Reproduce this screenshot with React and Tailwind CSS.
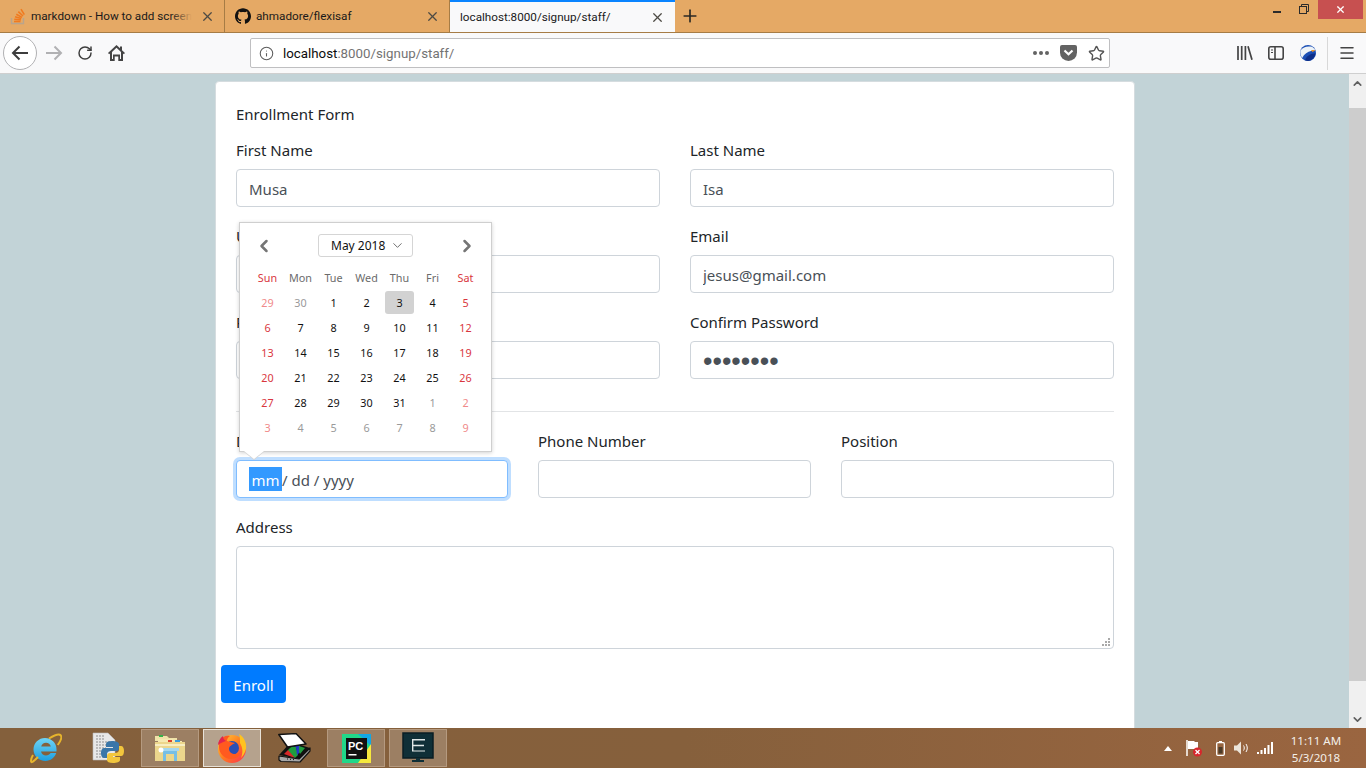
import React from "react";
import { SiGithub } from "react-icons/si";
import { ChevronLeft, ChevronRight, ChevronDown, ChevronUp, X, Plus, RotateCw, Info, Star, Menu } from "lucide-react";

const F = "[font-family:'Noto_Sans','Open_Sans',sans-serif]";
const R = "[font-family:Roboto,'Noto_Sans',sans-serif]";

function SO() {
  return (
    <svg width="16" height="18" viewBox="0 0 16 18" fill="none">
      <path d="M1.5 11v5.500h12V11" stroke="#b9a48c" strokeWidth="1.400" />
      <g stroke="#f07a1f" strokeWidth="1.600">
        <path d="M4 14.500h6.500" />
        <path d="M4.300 12.300l6.500.6" />
        <path d="M5 9.800l6.300 1.800" />
        <path d="M6.300 7.200l5.700 3.200" />
        <path d="M8.300 4.600l4.700 4.400" />
        <path d="M11 2.200l3.300 5.400" />
      </g>
    </svg>
  );
}

function Tab({ icon, title, active, fade }) {
  return (
    <div className={`relative flex h-full w-[225px] shrink-0 items-center pl-[10px] ${active ? "z-10 h-[34px] self-start border-t-2 border-[#0a84ff] bg-[#f9f9fa] pr-[10px]" : "border-r border-[#a67c45] pr-[9px]"}`}>
      {icon && <span className="mr-[5px] flex w-[16px] justify-center">{icon}</span>}
      <span className={`relative flex-1 overflow-hidden whitespace-nowrap pt-[1px] text-[11.700px] text-[#1a1a1a] ${R}`}>
        {title}
        {fade && <span className="absolute right-0 top-0 h-full w-[22px] bg-gradient-to-r from-transparent to-[#e5a965]" />}
      </span>
      <X size={15} strokeWidth={2} className="ml-2 text-[#4d4a44]" />
    </div>
  );
}

function BackArrow({ color = "#3d3d3d", flip }) {
  return (
    <svg width="18" height="16" viewBox="0 0 18 16" fill="none" stroke={color} strokeWidth="2">
      <path d={flip ? "M1 8h15M9.500 1.500L16 8l-6.500 6.500" : "M17 8H2M8.500 1.500L2 8l6.500 6.500"} />
    </svg>
  );
}

function Home() {
  return (
    <svg width="17" height="16" viewBox="0 0 17 16" fill="#444">
      <path fillRule="evenodd" d="M8.500 0L0 8l1.200 1.200L2 8.500V16h4.700v-4.500h3.600V16H15V8.500l.8.700L17 8 14 5.200V1.500h-2v1.800zM4 7l4.500-4.300L13 7v7h-1v-4.500H5V14H4z" />
    </svg>
  );
}

function Pocket() {
  return (
    <svg width="17" height="16" viewBox="0 0 17 16">
      <path d="M0 2a2 2 0 012-2h13a2 2 0 012 2v5.500a8.500 8.500 0 01-17 0z" fill="#636363" />
      <path d="M4.500 5.500l4 3.700 4-3.700" stroke="#fff" strokeWidth="2.200" fill="none" />
    </svg>
  );
}

function Library() {
  return (
    <svg width="16" height="14" viewBox="0 0 16 14" stroke="#444" strokeWidth="1.700" fill="none">
      <path d="M1 0v14M4.700 0v14M8.400 0v14M11 .3l4 13.500" />
    </svg>
  );
}

function Sidebar() {
  return (
    <svg width="16" height="14" viewBox="0 0 16 14" fill="none" stroke="#444" strokeWidth="1.600">
      <rect x=".8" y=".8" width="14.400" height="12.400" rx="2" />
      <path d="M7 1v12" />
      <path d="M3 4h2M3 6.500h2" strokeWidth="1.200" />
    </svg>
  );
}

function Eagle() {
  return (
    <svg width="16" height="16" viewBox="0 0 16 16">
      <circle cx="8" cy="8" r="8" fill="#1b4fb5" />
      <path d="M0.400 5.500C3 2 6.500 1 11 1.600c2 .6 3.500 2 4.300 3.700l-4.300.8C8 6.800 4 9 2.200 13 .6 11 0 8 .4 5.500z" fill="#eef3f7" />
      <path d="M11 5l4.500.2-3 1.900z" fill="#f0921e" />
      <path d="M6 13c2-3 6-5 9.600-4.500C15 12 12 15.600 8 16c-1 0-2-.3-3-.8z" fill="#0d2f8a" />
    </svg>
  );
}

function Label({ children }) {
  return <label className="mb-[7px] block h-6 text-[15px] leading-[24px] text-[#212529]">{children}</label>;
}

function Field({ label, value, type = "text" }) {
  const pw = type === "password";
  return (
    <div className="min-w-0 flex-1">
      <Label>{label}</Label>
      <input
        readOnly
        type={type}
        value={value || ""}
        className={`block h-[38px] w-full rounded-[4px] border border-[#ced4da] bg-white px-3 text-[#495057] outline-none ${pw ? "pt-[3px] text-[27px] [font-family:'Liberation_Sans',sans-serif]" : "pt-[2px] text-[15px]"}`}
      />
    </div>
  );
}

const RED = "text-[#d9363e]";
const DARK = "text-[#111]";
const HEAD = ["Sun", "Mon", "Tue", "Wed", "Thu", "Fri", "Sat"];
const WEEKS = [
  [29, 30, 1, 2, 3, 4, 5],
  [6, 7, 8, 9, 10, 11, 12],
  [13, 14, 15, 16, 17, 18, 19],
  [20, 21, 22, 23, 24, 25, 26],
  [27, 28, 29, 30, 31, 1, 2],
  [3, 4, 5, 6, 7, 8, 9],
];

function dayColor(r, c) {
  const out = (r === 0 && c < 2) || (r === 4 && c > 4) || r === 5;
  const weekend = c === 0 || c === 6;
  if (out) return weekend ? "text-[#f08a8a]" : "text-[#9a9a9a]";
  return weekend ? RED : DARK;
}

function Calendar() {
  return (
    <div className="absolute left-[23px] top-[140px] z-20 h-[230px] w-[253px] border border-[#cfcfcf] bg-white shadow-[0_1px_4px_rgba(0,0,0,0.18)]">
      <div className="flex h-[42px] items-center pl-[14px] pr-[14px] pt-[3px]">
        <ChevronLeft size={20} strokeWidth={3} className="text-[#757575]" />
        <div className="ml-[44px] flex h-[23px] w-[95px] items-center rounded-[3px] border border-[#d5d5d5] pl-[12px] text-[12px] text-[#111]">
          May 2018
          <ChevronDown size={15} strokeWidth={1.500} className="ml-[5px] text-[#666]" />
        </div>
        <ChevronRight size={20} strokeWidth={3} className="ml-auto text-[#757575]" />
      </div>
      <div className="ml-[11px] grid w-[231px] grid-cols-[repeat(7,33px)] auto-rows-[25px] text-center text-[10.800px] leading-[25px]">
        {HEAD.map((h, i) => (
          <div key={h} className={i === 0 || i === 6 ? RED : "text-[#6b6b6b]"}>{h}</div>
        ))}
        {WEEKS.map((w, r) =>
          w.map((d, c) => (
            <div key={`${r}-${c}`} className="flex items-center justify-center">
              {r === 0 && c === 4 ? (
                <span className="mr-[1px] flex h-[23px] w-[29px] items-center justify-center rounded-[3px] bg-[#d2d2d2] pl-[1px] text-[#111]">{d}</span>
              ) : (
                <span className={dayColor(r, c)}>{d}</span>
              )}
            </div>
          ))
        )}
      </div>
      <span className="absolute left-[4px] top-[228px] h-0 w-0 border-x-[10px] border-t-[8px] border-x-transparent border-t-white [filter:drop-shadow(0_1px_0_#d5d5d5)]" />
    </div>
  );
}

function DateField() {
  return (
    <div className="min-w-0 w-[272px]">
      <Label>Date of Birth</Label>
      <div className="flex h-[38px] w-full items-center rounded-[4px] border border-[#80bdff] bg-white pl-[12px] text-[15px] text-[#495057] shadow-[0_0_0_3px_rgba(0,123,255,0.25)]">
        <span className="flex h-[24px] w-[33px] items-center justify-center bg-[#3399ff] pt-[3px] text-white">mm</span>
        <span className="whitespace-pre pt-[3px]">/ dd / yyyy</span>
      </div>
    </div>
  );
}

function IE() {
  return (
    <svg width="32" height="34" viewBox="0 0 32 34" fill="none">
      <defs>
        <linearGradient id="iea" x1="0" y1="0" x2="0" y2="1">
          <stop offset="0" stopColor="#6fd4f5" />
          <stop offset="1" stopColor="#1d9fe0" />
        </linearGradient>
      </defs>
      <path d="M3.500 18.500a11.500 11.500 0 0123 0v2H11c.6 2.600 2.600 4 5 4 2 0 3.600-.8 4.600-2.400h5.600C24.600 26.800 20.600 30 15.500 30 8.800 30 3.500 25 3.500 18.500zm7.700-3h9.600c-.5-2.300-2.400-3.800-4.800-3.800s-4.300 1.500-4.800 3.800z" fill="url(#iea)" />
      <path d="M19 7.500c5-3 10-5 11.700-3.200 1.600 1.800-.7 6.500-3 9.700M8 26C4 30 1.600 32 1.200 30.800c-.6-1.600.2-4 1.800-6.800" stroke="#e6b42c" strokeWidth="2" />
    </svg>
  );
}

function PythonFile() {
  return (
    <svg width="32" height="32" viewBox="0 0 32 32">
      <path d="M1 1h15l7 7v20H1z" fill="#e8e8e8" stroke="#bbb" strokeWidth=".6" />
      <path d="M4 4h9M4 7h9M4 10h14M4 13h14M4 16h10M4 19h10M4 22h10M4 25h10" stroke="#8d8d8d" strokeDasharray="2 1" />
      <path d="M20 9c-4 0-6 1-6 3v3h7v1h-8c-3 0-4 2-4 5s1 5 4 5h2v-4c0-2 2-3 4-3h5c2 0 3-1 3-3v-4c0-2-3-3-7-3z" fill="#3a76a8" />
      <path d="M21 31c4 0 7-1 7-3v-3h-7v-1h8c2 0 3-2 3-5s-1-5-3-5h-2v4c0 2-2 3-4 3h-5c-2 0-3 1-3 3v4c0 2 2 3 6 3z" fill="#f2c63d" />
    </svg>
  );
}

function Folder() {
  return (
    <svg width="32" height="32" viewBox="0 0 32 32">
      <path d="M1 4h12l2 2h8v3H1z" fill="#efe3a8" />
      <rect x="5" y="3" width="4" height="2" fill="#35b24a" />
      <path d="M4 7h15l2 2h7v3H4z" fill="#f6e9b2" />
      <rect x="14" y="8" width="4" height="2" fill="#d9432f" />
      <rect x="21" y="8" width="5" height="2" fill="#3b9bdc" />
      <path d="M1 10h30v19H1z" fill="#ecd68c" />
      <path d="M1 12h30v2H1z" fill="#f8edc2" />
      <path d="M9 19h14v10h-3v-7h-8v7H9z" fill="#77bfe6" />
      <path d="M7 16h18v3H7z" fill="#a5d7ef" />
      <circle cx="7" cy="18" r="2.500" fill="#fff" />
    </svg>
  );
}

function Firefox() {
  return (
    <svg width="30" height="30" viewBox="0 0 30 30">
      <defs>
        <linearGradient id="ffa" x1="0" y1="0" x2="1" y2="1">
          <stop offset="0" stopColor="#ffd23c" />
          <stop offset=".5" stopColor="#ff7a1f" />
          <stop offset="1" stopColor="#ff2f52" />
        </linearGradient>
      </defs>
      <circle cx="15" cy="16" r="14" fill="url(#ffa)" />
      <path d="M22 1c5 3 8 9 7 15-1 4-3 7-5 9 2-5 2-10-1-15 0-4 0-6-1-9z" fill="#ffc21f" />
      <circle cx="15" cy="15" r="7" fill="#2a4fb5" />
      <path d="M2 8c3-4 7-6 11-5-2 1-3 3-3 5 2 1 5 1 8 2-3 2-6 3-6 6 0 3 3 5 6 5 3 0 5-1 6-3-1 5-5 8-10 8C7 26 2 20 2 14z" fill="#ff5a1f" />
      <path d="M1 12c0-3 2-7 5-9 0 2 1 4 3 5-3 1-6 2-8 4z" fill="#e0244f" />
    </svg>
  );
}

function Scanner() {
  return (
    <svg width="33" height="30" viewBox="0 0 33 30">
      <path d="M1 22L13 9l19 6-11 11z" fill="#111" />
      <path d="M6 21l4-4 4 1 3 7z" fill="#d62828" />
      <path d="M10 17l4-4 4 1 2 8-3 3z" fill="#1f9d3f" />
      <path d="M14 13l3-2 5 2 0 6-3 3-1-8z" fill="#2438c8" />
      <path d="M21 13l6 2-5 6-1-2z" fill="#1f9d3f" />
      <path d="M.8 1.500L18 .6l10 10.400-18.500 3z" fill="#fff" stroke="#111" strokeWidth="1.500" strokeLinejoin="round" />
      <path d="M1 23l20 3 11-11v3L22 29 3 28.500 1 27z" fill="#a8a8a8" stroke="#111" strokeWidth="1.200" strokeLinejoin="round" />
      <path d="M9 26h1M12 26.300h1M15 26.600h1" stroke="#111" />
    </svg>
  );
}

function PyCharm() {
  return (
    <svg width="29" height="29" viewBox="0 0 29 29">
      <rect width="29" height="29" fill="#21d789" />
      <path d="M16 0h13v12z" fill="#11a7e5" />
      <path d="M29 10v19H16z" fill="#f6e93d" />
      <rect x="4" y="4" width="21" height="21" fill="#111" />
      <rect x="6.500" y="20" width="8" height="1.500" fill="#fff" />
      <text x="6" y="16" fill="#fff" fontSize="11" fontWeight="700" fontFamily="'Liberation Sans',sans-serif">PC</text>
    </svg>
  );
}

function Terminal() {
  return (
    <svg width="32" height="32" viewBox="0 0 32 32">
      <rect x="1" y="1" width="30" height="25" fill="#0f2f37" stroke="#0a1e24" strokeWidth="1.500" />
      <path d="M10 7h13v1.400H11.400v4.400H22v1.400H11.400v4.400H23V19.500H10z" fill="#dfe6e6" />
      <path d="M14 26h4v2h4v2H10v-2h4z" fill="#0f2f37" />
    </svg>
  );
}

function TaskItem({ children, state }) {
  const cls =
    state === "active"
      ? "border-[#e8e2d8] bg-[#b5a28d]"
      : state === "open"
      ? "border-[#b59a80] bg-[#9c7f63]"
      : "border-transparent";
  return <div className={`flex h-[38px] w-[58px] shrink-0 items-center justify-center border ${cls}`}>{children}</div>;
}

function Tray() {
  return (
    <div className="ml-auto flex items-center pr-[22px]">
      <svg width="8" height="5" viewBox="0 0 8 5" className="mr-[14px]"><path d="M0 5L4 0l4 5z" fill="#fff" /></svg>
      <svg width="16" height="17" viewBox="0 0 16 17" className="mr-[14px]">
        <path d="M1 0v16" stroke="#fff" strokeWidth="1.500" />
        <path d="M2 1h6l1 1h3v7H2z" fill="#fff" />
        <circle cx="11.500" cy="12" r="4.500" fill="#d8262c" />
        <path d="M9.500 10l4 4M13.500 10l-4 4" stroke="#fff" strokeWidth="1.300" />
      </svg>
      <svg width="9" height="15" viewBox="0 0 9 15" className="mr-[9px]">
        <rect x=".7" y="1.700" width="7.600" height="12.600" rx="1" fill="none" stroke="#fff" strokeWidth="1.300" />
        <rect x="3" y="0" width="3" height="1.500" fill="#fff" />
        <rect x="2.500" y="6" width="4" height="6.500" fill="#4a3a28" />
      </svg>
      <svg width="16" height="14" viewBox="0 0 16 14" className="mr-[7px]">
        <path d="M0 4.500h3L7 .5v13l-4-4H0z" fill="#ece5da" />
        <path d="M9.500 4.500c1 1.500 1 3.500 0 5M12 3c1.700 2.500 1.700 5.500 0 8" stroke="#fff" strokeWidth="1" fill="none" />
      </svg>
      <svg width="16" height="12" viewBox="0 0 16 12" className="mr-[15px]">
        <path d="M0 10h2v2H0zM3.500 8h2v4h-2zM7 6h2v6H7zM10.500 3h2v9h-2zM14 0h2v12h-2z" fill="#fff" />
      </svg>
      <div className="mt-[1px] w-[56px] text-center text-[11.600px] leading-[17px] text-[#f3efe9]">
        <div>11:11 AM</div>
        <div>5/3/2018</div>
      </div>
    </div>
  );
}

export default function App() {
  return (
    <div className={`flex h-screen w-[1366px] flex-col overflow-hidden ${F}`}>
      {/* Tab bar */}
      <div className="relative flex h-[33px] shrink-0 border-b border-[#a67c45] bg-[#e5a965]">
        <Tab icon={<SO />} title="markdown - How to add screenshots" fade />
        <Tab icon={<SiGithub size={16} color="#111" />} title="ahmadore/flexisaf" />
        <Tab title="localhost:8000/signup/staff/" active />
        <Plus size={20} strokeWidth={2} className="ml-[5px] mt-[6px] text-[#2b2924]" />
        <div className="ml-auto flex h-[19px] items-start">
          <span className="mr-[18px] mt-[11px] h-[2px] w-[8px] bg-[#2b2b2b]" />
          <svg width="10" height="10" viewBox="0 0 10 10" fill="none" stroke="#2b2b2b" className="mr-[9px] mt-[4px]">
            <rect x=".5" y="2.500" width="7" height="7" />
            <path d="M2.500 2V.5h7v7H8" />
          </svg>
          <div className="mr-[3px] flex h-[19px] w-[45px] items-center justify-center bg-[#c75050]">
            <X size={11} strokeWidth={2.600} color="#fff" />
          </div>
        </div>
      </div>

      {/* Toolbar */}
      <div className="flex h-[41px] shrink-0 items-center border-b border-[#cfcfcf] bg-[#f9f9fa]">
        <div className="ml-[3px] flex h-[34px] w-[34px] items-center justify-center rounded-full border border-[#b1b1b3] bg-white">
          <BackArrow />
        </div>
        <span className="ml-[8px] flex"><BackArrow color="#b1b1b3" flip /></span>
        <RotateCw size={16} strokeWidth={2.200} className="ml-[14px] text-[#3d3d3d]" />
        <span className="ml-[15px] flex"><Home /></span>
        <div className="ml-[125px] flex h-[30px] w-[860px] items-center rounded-[2px] border border-[#bfbfc1] bg-white pl-[8px] pr-[4px]">
          <Info size={15} strokeWidth={1.700} className="text-[#5c5c5c]" />
          <span className={`ml-[9px] pt-[1px] text-[13.300px] text-[#0c0c0d] ${R}`}>localhost<span className="text-[#737373]">:8000/signup/staff/</span></span>
          <span className="ml-auto mr-[11px] flex gap-[2px]">
            <i className="h-[4px] w-[4px] rounded-full bg-[#636363]" />
            <i className="h-[4px] w-[4px] rounded-full bg-[#636363]" />
            <i className="h-[4px] w-[4px] rounded-full bg-[#636363]" />
          </span>
          <Pocket />
          <Star size={17} strokeWidth={2} className="ml-[11px] text-[#555]" />
        </div>
        <span className="ml-[127px] flex"><Library /></span>
        <span className="ml-[15px] flex"><Sidebar /></span>
        <span className="ml-[16px] flex"><Eagle /></span>
        <span className="ml-[11px] h-[33px] w-px bg-[#d8d8d8]" />
        <Menu size={18} strokeWidth={2} className="ml-[10px] text-[#444]" />
      </div>

      {/* Page */}
      <div className="flex min-h-0 flex-1">
        <div className="relative min-w-0 flex-1 overflow-hidden bg-[#c2d3d7] pt-[7px]">
          <div className="relative ml-[215px] h-[700px] w-[920px] rounded-[4px] border border-[#d5dcdf] bg-white px-[20px] pt-[20px] text-[#212529]">
            <div className="h-6 text-[15px] leading-[24px]">Enrollment Form</div>
            <div className="mt-[12px] flex gap-[30px]">
              <Field label="First Name" value="Musa" />
              <Field label="Last Name" value="Isa" />
            </div>
            <div className="mt-[17px] flex gap-[30px]">
              <Field label="Username" />
              <Field label="Email" value="jesus@gmail.com" />
            </div>
            <div className="mt-[17px] flex gap-[30px]">
              <Field label="Password" />
              <Field label="Confirm Password" value="password" type="password" />
            </div>
            <hr className="mt-[32px] border-[#e2e4e6]" />
            <div className="mt-[17px] flex gap-[30px]">
              <DateField />
              <Field label="Phone Number" />
              <Field label="Position" />
            </div>
            <div className="mt-[17px]">
              <Label>Address</Label>
              <div className="relative">
                <textarea readOnly className="block h-[103px] w-full resize-none rounded-[4px] border border-[#ced4da] bg-white outline-none" />
                <svg width="9" height="9" viewBox="0 0 9 9" fill="#a9a9a9" className="absolute bottom-[2px] right-[3px]">
                  <rect x="6" y="0" width="2" height="2" />
                  <rect x="3" y="3" width="2" height="2" />
                  <rect x="6" y="3" width="2" height="2" />
                  <rect x="0" y="6" width="2" height="2" />
                  <rect x="3" y="6" width="2" height="2" />
                  <rect x="6" y="6" width="2" height="2" />
                </svg>
              </div>
            </div>
            <button className="-ml-[15px] mt-[16px] block h-[38px] w-[65px] rounded-[4px] bg-[#007bff] pt-[3px] text-[15px] text-white">Enroll</button>
            <Calendar />
          </div>
        </div>
        {/* Scrollbar */}
        <div className="flex w-[17px] shrink-0 flex-col items-center bg-[#f0f0f0]">
          <div className="flex h-[34px] w-full items-start justify-center pt-[3px]">
            <ChevronUp size={13} strokeWidth={3} className="text-[#606060]" />
          </div>
          <div className="h-[573px] w-full bg-[#cdcdcd]" />
          <div className="flex flex-1 items-end justify-center pb-[2px]">
            <ChevronDown size={13} strokeWidth={3} className="text-[#606060]" />
          </div>
        </div>
      </div>

      {/* Taskbar */}
      <div className="flex h-[40px] shrink-0 items-center gap-1 bg-gradient-to-r from-[#84603c] via-[#86603c] to-[#9a6540] pl-[17px]">
        <TaskItem><IE /></TaskItem>
        <TaskItem><PythonFile /></TaskItem>
        <TaskItem state="open"><Folder /></TaskItem>
        <TaskItem state="active"><Firefox /></TaskItem>
        <TaskItem><Scanner /></TaskItem>
        <TaskItem state="open"><PyCharm /></TaskItem>
        <TaskItem state="open"><Terminal /></TaskItem>
        <Tray />
      </div>
    </div>
  );
}
